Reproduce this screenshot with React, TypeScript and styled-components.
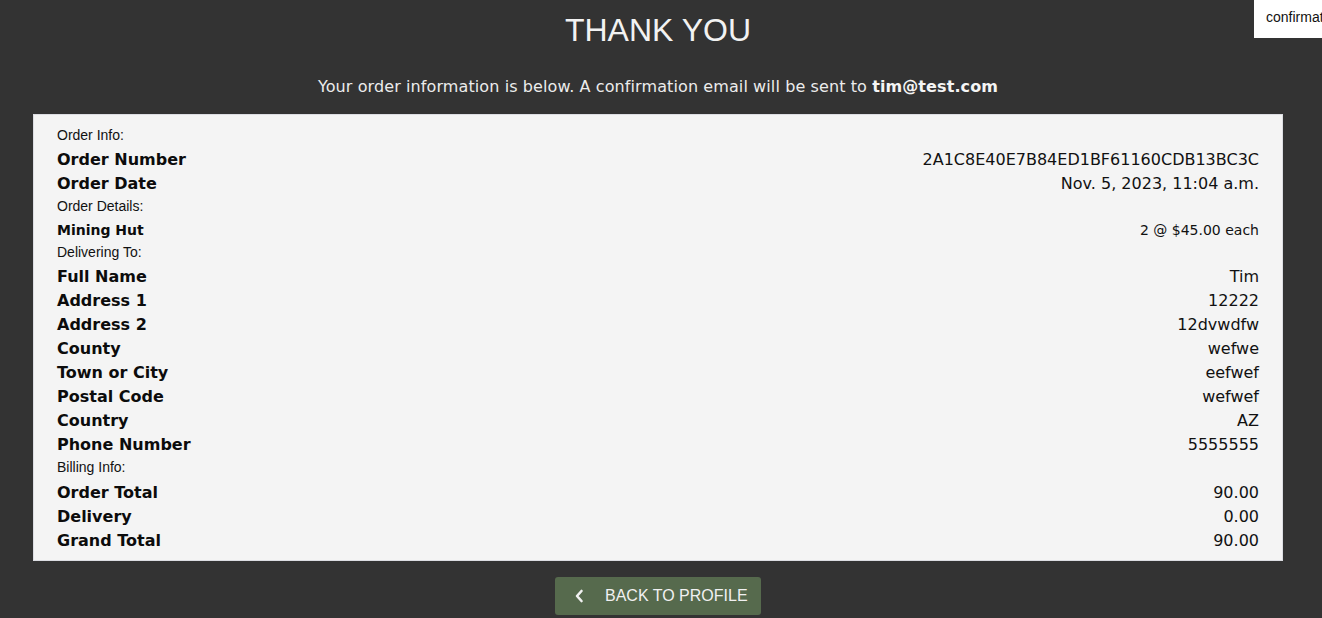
import React from "react";
import styled, { createGlobalStyle } from "styled-components";

const Global = createGlobalStyle`
  html, body { margin: 0; padding: 0; overflow: hidden; }
  body { background: #333333; font-family: "DejaVu Sans", Verdana, sans-serif; }
`;

const Page = styled.div`
  width: 1316px;
  height: 618px;
  display: flex;
  flex-direction: column;
  align-items: center;
`;

const Title = styled.h1`
  margin: 0;
  padding-top: 11px;
  height: 39px;
  line-height: 39px;
  font-family: "Liberation Sans", Arial, sans-serif;
  font-weight: 400;
  font-size: 32px;
  color: #f2f2f2;
`;

const Intro = styled.p`
  margin: 26px 0 0;
  line-height: 22px;
  height: 21px;
  font-size: 16px;
  letter-spacing: 0.1px;
  color: #ececec;
  b { color: #f5f5f5; }
`;

const Card = styled.section`
  margin-top: 17px;
  width: 1250px;
  box-sizing: border-box;
  background: #f4f4f4;
  border: 1px solid #dcdde2;
  padding: 9px 23px 8px;
  display: flex;
  flex-direction: column;
`;

const SectionLabel = styled.div<{ $tall?: boolean }>`
  height: ${(p) => (p.$tall ? "24px" : "23px")};
  line-height: 23px;
  font-family: "Liberation Sans", Arial, sans-serif;
  font-size: 14px;
  color: #111;
`;

const Row = styled.div<{ $small?: boolean }>`
  display: flex;
  justify-content: space-between;
  align-items: center;
  height: ${(p) => (p.$small ? "23px" : "24px")};
  font-size: ${(p) => (p.$small ? "14px" : "16px")};
  color: #111;
`;

const Key = styled.span`
  font-weight: 700;
  color: #0c0c0c;
`;

const Value = styled.span`
  text-align: right;
`;

const BackButton = styled.button`
  margin-top: 16px;
  width: 206px;
  height: 38px;
  border: none;
  border-radius: 3px;
  background: #566a4d;
  color: #f1f1f1;
  display: flex;
  align-items: center;
  padding: 0 0 0 19px;
  gap: 21px;
  font-family: "Liberation Sans", Arial, sans-serif;
  font-size: 16px;
  cursor: pointer;
`;

const Toast = styled.div`
  position: absolute;
  top: 0;
  left: 1254px;
  width: 120px;
  height: 38px;
  box-sizing: border-box;
  padding: 9px 12px;
  background: #ffffff;
  font-family: "Liberation Sans", Arial, sans-serif;
  font-size: 14px;
  color: #111;
  white-space: nowrap;
`;

type Item = { k: string; v: string };

const orderInfo: Item[] = [
  { k: "Order Number", v: "2A1C8E40E7B84ED1BF61160CDB13BC3C" },
  { k: "Order Date", v: "Nov. 5, 2023, 11:04 a.m." },
];

const delivery: Item[] = [
  { k: "Full Name", v: "Tim" },
  { k: "Address 1", v: "12222" },
  { k: "Address 2", v: "12dvwdfw" },
  { k: "County", v: "wefwe" },
  { k: "Town or City", v: "eefwef" },
  { k: "Postal Code", v: "wefwef" },
  { k: "Country", v: "AZ" },
  { k: "Phone Number", v: "5555555" },
];

const billing: Item[] = [
  { k: "Order Total", v: "90.00" },
  { k: "Delivery", v: "0.00" },
  { k: "Grand Total", v: "90.00" },
];

const Rows = ({ items }: { items: Item[] }) => (
  <>
    {items.map((i) => (
      <Row key={i.k}>
        <Key>{i.k}</Key>
        <Value>{i.v}</Value>
      </Row>
    ))}
  </>
);

export default function App() {
  return (
    <>
      <Global />
      <Page>
        <Title>THANK YOU</Title>
        <Intro>
          Your order information is below. A confirmation email will be sent to <b>tim@test.com</b>
        </Intro>
        <Card>
          <SectionLabel>Order Info:</SectionLabel>
          <Rows items={orderInfo} />
          <SectionLabel>Order Details:</SectionLabel>
          <Row $small>
            <Key>Mining Hut</Key>
            <Value>2 @ $45.00 each</Value>
          </Row>
          <SectionLabel>Delivering To:</SectionLabel>
          <Rows items={delivery} />
          <SectionLabel $tall>Billing Info:</SectionLabel>
          <Rows items={billing} />
        </Card>
        <BackButton>
          <svg width="10" height="14" viewBox="0 0 10 14" fill="none">
            <path d="M7.5 2 L3 7 L7.5 12" stroke="#f1f1f1" strokeWidth="2.6" strokeLinecap="round" strokeLinejoin="round" />
          </svg>
          BACK TO PROFILE
        </BackButton>
      </Page>
      <Toast>confirmation</Toast>
    </>
  );
}
